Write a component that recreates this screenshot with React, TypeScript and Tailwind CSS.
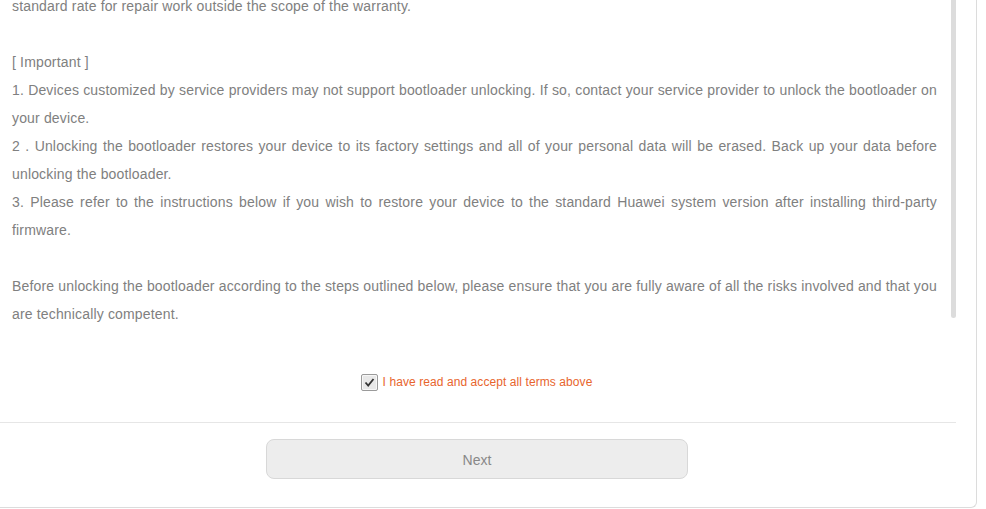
import { useState } from 'react'

// each paragraph is kept as the lines it wraps into, full lines are justified
const paragraphs: string[][] = [
  ['standard rate for repair work outside the scope of the warranty.'],
  [''],
  ['[ Important ]'],
  [
    '1. Devices customized by service providers may not support bootloader unlocking. If so, contact your service provider to unlock the bootloader on',
    'your device.',
  ],
  [
    '2 . Unlocking the bootloader restores your device to its factory settings and all of your personal data will be erased. Back up your data before',
    'unlocking the bootloader.',
  ],
  [
    '3. Please refer to the instructions below if you wish to restore your device to the standard Huawei system version after installing third-party',
    'firmware.',
  ],
  [''],
  [
    'Before unlocking the bootloader according to the steps outlined below, please ensure that you are fully aware of all the risks involved and that you',
    'are technically competent.',
  ],
]

export default function App() {
  const [agreed, setAgreed] = useState(true)

  return (
    <div className="w-[986px] h-[509px] overflow-hidden bg-white font-['Liberation_Sans',Arial,sans-serif]">
      <div className="w-[977px] h-[508px] border-r border-b border-[#dcdcdc] rounded-br-[6px]">
        <div className="w-[956px] flex flex-col">
          <div className="flex items-start h-[328px]">
            <div className="ml-3 w-[925px] -mt-2 text-[14px] leading-[28px] tracking-[0.16px] text-[#808080]">
              {paragraphs.map((p, i) => (
                <p key={i} className="min-h-[28px]">
                  {p.map((line, j) => (
                    <span
                      key={j}
                      className={
                        j < p.length - 1
                          ? 'block whitespace-nowrap text-justify [text-align-last:justify]'
                          : 'block whitespace-nowrap'
                      }
                    >
                      {line}
                    </span>
                  ))}
                </p>
              ))}
            </div>
            <div className="ml-[14px] w-[7px] h-[318px] bg-[#dcdcdc] rounded-b-[3px]" />
          </div>

          <label className="mt-[44px] h-5 pr-[3px] flex items-center justify-center cursor-pointer select-none">
            <span
              className="w-[17px] h-[17px] border border-[#9a9a9a] rounded-[2px] bg-[#e8e8e8] shadow-[inset_0_0_0_1px_#f7f7f7] flex items-center justify-center"
              onClick={() => setAgreed(!agreed)}
            >
              {agreed && (
                <svg width="13" height="13" viewBox="0 0 13 13">
                  <path d="M2.5 6.5 L5.2 9.5 L10.5 3" fill="none" stroke="#333333" strokeWidth="1.8" />
                </svg>
              )}
            </span>
            <span className="ml-[5px] text-[12px] tracking-[0.08px] text-[#e8652d]">I have read and accept all terms above</span>
          </label>

          <div className="mt-[30px] border-t border-[#e6e6e6]" />

          <div className="mt-4 pr-[2px] flex justify-center">
            <button className="w-[422px] h-10 rounded-[8px] border border-[#d8d8d8] bg-[#ededed] text-[14px] text-[#888888] pt-[2px]">
              Next
            </button>
          </div>
        </div>
      </div>
    </div>
  )
}
